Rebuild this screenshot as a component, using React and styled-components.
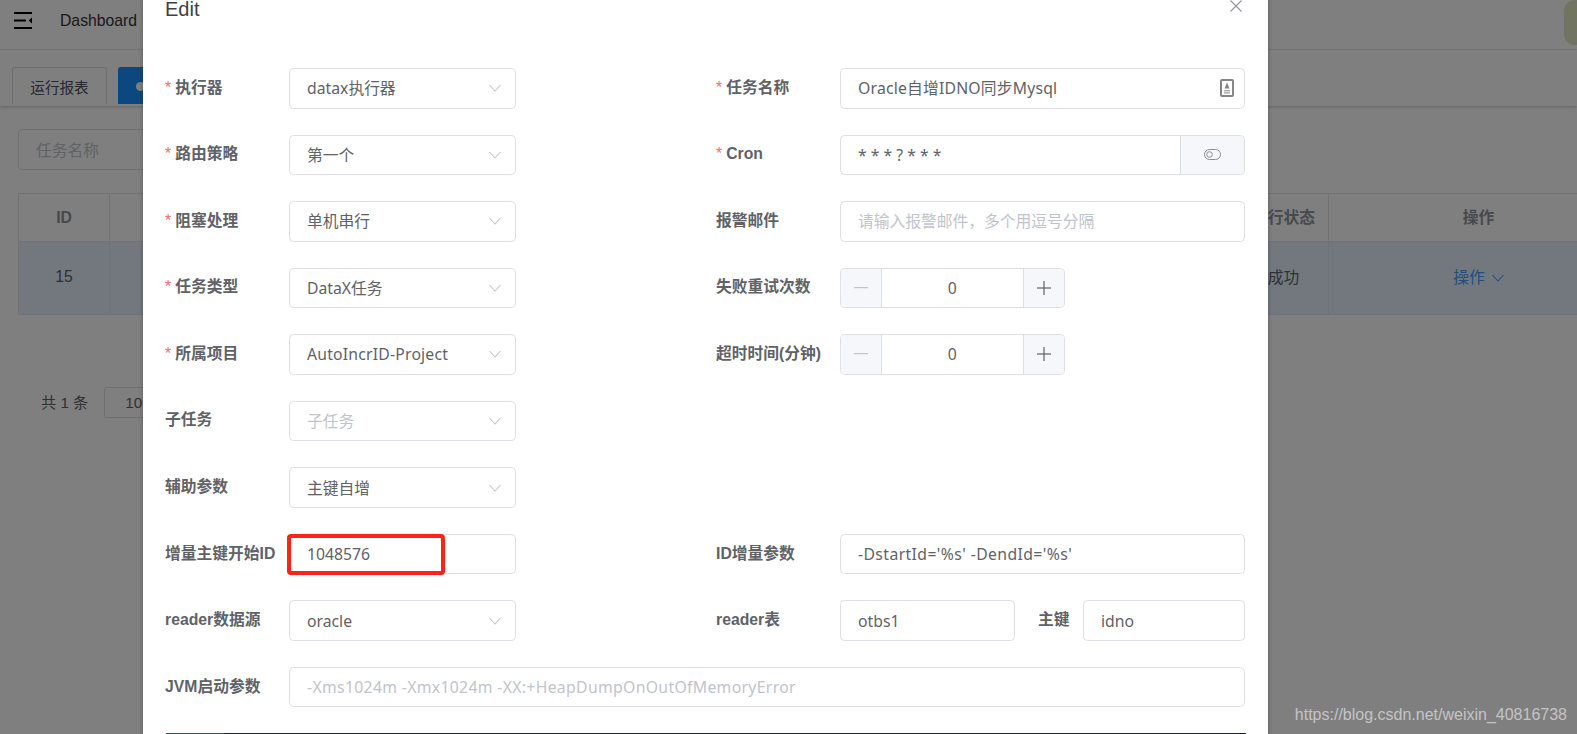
import styled, { createGlobalStyle } from 'styled-components';

const FONT = '"Liberation Sans", "Noto Sans CJK SC", Arial, sans-serif';
const FIELD_FONT = '"Noto Sans", "Noto Sans CJK SC", Arial, sans-serif';

const GlobalStyle = createGlobalStyle`
  html, body {
    margin: 0;
    height: 100%;
    overflow: hidden;
    background: #fff;
    font-family: ${FONT};
  }
  * {
    box-sizing: border-box;
  }
`;

const Page = styled.div`
  width: 1577px;
  height: 734px;
  overflow: hidden;
  position: relative;
  background: #fff;
`;

/* underlying app */
const Navbar = styled.header`
  height: 50px;
  display: flex;
  align-items: center;
  justify-content: space-between;
  padding-left: 14px;
  border-bottom: 1px solid #f0f0f0;
`;

const NavLeft = styled.div`
  display: flex;
  align-items: center;
  gap: 28px;
  font-size: 15.75px;
  color: #333;
  margin-top: -8px;
`;

const Avatar = styled.div`
  width: 45px;
  height: 45px;
  margin-top: -5px;
  margin-right: -32px;
  border-radius: 11px;
  background: #e0e8c0;
`;

const TagsBar = styled.div`
  height: 56px;
  display: flex;
  gap: 11px;
  padding: 17px 0 0 12px;
  box-shadow: 0 1px 3px rgba(0, 0, 0, 0.22);
`;

const Tag = styled.div`
  height: 37px;
  display: flex;
  align-items: center;
  justify-content: ${(p) => (p.$active ? 'flex-start' : 'center')};
  gap: 6px;
  width: ${(p) => (p.$active ? '120px' : '95px')};
  padding-left: ${(p) => (p.$active ? '17px' : '0')};
  font-size: 14.6px;
  color: ${(p) => (p.$active ? '#fff' : '#495060')};
  background: ${(p) => (p.$active ? '#1890ff' : '#fff')};
  border: 1px solid ${(p) => (p.$active ? '#1890ff' : '#d8dce5')};
  border-bottom: none;
  border-radius: 3px 3px 0 0;
`;

const TagDot = styled.span`
  width: 9px;
  height: 9px;
  border-radius: 50%;
  background: #fff;
`;

const Content = styled.main`
  padding: 23px 0 0 18px;
`;

const SearchBox = styled.div`
  width: 225px;
  height: 41px;
  display: flex;
  align-items: center;
  padding-left: 17px;
  border: 1px solid #dcdfe6;
  border-radius: 4px;
  font-size: 15.75px;
  color: #c0c4cc;
`;

const Table = styled.div`
  width: 1611px;
  margin-top: 23px;
  display: grid;
  grid-template-columns: 91px 1fr 90px 300px;
  grid-template-rows: 48px 73px;
  border-top: 1px solid #dfe6ec;
  border-left: 1px solid #dfe6ec;
`;

const Cell = styled.div`
  display: flex;
  align-items: center;
  justify-content: center;
  gap: 7px;
  line-height: 20px;
  padding-bottom: ${(p) => (p.$lift ? '2px' : '0')};
  border-right: 1px solid #dfe6ec;
  border-bottom: 1px solid #dfe6ec;
  font-size: 15.75px;
  font-weight: ${(p) => (p.$head ? 700 : 400)};
  color: ${(p) => (p.$head ? '#909399' : '#606266')};
  background: ${(p) => (p.$head ? '#fff' : '#e6f0ff')};
`;

const RowLink = styled.span`
  display: flex;
  align-items: center;
  gap: 7px;
  color: #409eff;
`;

const Pagination = styled.div`
  display: flex;
  align-items: center;
  gap: 16px;
  margin: 72px 0 0 23px;
  font-size: 15.2px;
  line-height: 20px;
  color: #606266;
`;

const PageSize = styled.div`
  width: 120px;
  height: 31px;
  display: flex;
  align-items: center;
  padding-left: 20px;
  border: 1px solid #dcdfe6;
  border-radius: 3px;
`;

/* dialog */
const Overlay = styled.div`
  position: absolute;
  inset: 0;
  background: rgba(0, 0, 0, 0.5);
`;

const Dialog = styled.div`
  width: 1125px;
  height: 900px;
  margin: -15px 0 0 143px;
  background: #fff;
  box-shadow: 0 2px 4px rgba(0, 0, 0, 0.3);
`;

const DialogHead = styled.div`
  display: flex;
  justify-content: space-between;
  align-items: flex-start;
  padding: 15px 26px 48px 22px;
  font-size: 20px;
  line-height: 18px;
  color: #3f4144;
`;

const Form = styled.div`
  display: grid;
  grid-template-columns: 551px 529px;
  grid-auto-rows: 40.5px;
  row-gap: 26.05px;
  margin: 2px 0 0 22px;
`;

const Item = styled.div`
  display: flex;
  align-items: center;
  grid-column: ${(p) => (p.$wide ? '1 / 3' : 'auto')};
`;

const Label = styled.label`
  flex: 0 0 124px;
  margin-top: -1px;
  font-size: 15.75px;
  line-height: 20px;
  font-weight: 700;
  color: #606266;
  white-space: nowrap;
`;

const Required = styled.span`
  color: #f56c6c;
  font-weight: 400;
  margin-right: 4px;
`;

const Field = styled.div`
  position: relative;
  height: 40.5px;
  width: ${(p) => p.$width || '100%'};
  flex: ${(p) => (p.$width ? '0 0 auto' : '1')};
  display: flex;
  align-items: center;
  justify-content: space-between;
  padding: 0 14px 0 17px;
  background: #fff;
  border: 1px solid #dcdfe6;
  border-radius: 4.5px;
  font-family: ${FIELD_FONT};
  font-size: 15.75px;
  line-height: 20px;
  letter-spacing: ${(p) => p.$track || 'normal'};
  color: ${(p) => (p.$empty ? '#c0c4cc' : '#606266')};
  white-space: nowrap;
`;

const IconField = styled(Field)`
  padding-right: 10px;
`;

const GroupField = styled(Field)`
  padding-right: 0;
  overflow: hidden;
`;

const Append = styled.div`
  width: 64px;
  height: 100%;
  display: flex;
  align-items: center;
  justify-content: center;
  background: #f5f7fa;
  border-left: 1px solid #dcdfe6;
`;

const InlineLabel = styled.span`
  margin: -1px 13.5px 0 23px;
  font-size: 15.75px;
  line-height: 20px;
  font-weight: 700;
  color: #606266;
  white-space: nowrap;
`;

const Stepper = styled.div`
  width: 225px;
  height: 40.5px;
  display: grid;
  grid-template-columns: 41px 1fr 41.5px;
  border: 1px solid #dcdfe6;
  border-radius: 4.5px;
  overflow: hidden;
  font-family: ${FIELD_FONT};
  font-size: 15.75px;
  color: #606266;
`;

const StepButton = styled.div`
  display: flex;
  align-items: center;
  justify-content: center;
  background: #f5f7fa;
  color: ${(p) => (p.$disabled ? '#c0c4cc' : '#606266')};
  border-${(p) => (p.$disabled ? 'right' : 'left')}: 1px solid #dcdfe6;
`;

const StepValue = styled.div`
  display: flex;
  align-items: center;
  justify-content: center;
`;

const RedMark = styled.div`
  position: absolute;
  left: -3px;
  top: -1px;
  width: 158px;
  height: 41px;
  border: 4px solid #fb2416;
  border-radius: 4px;
`;

const Editor = styled.div`
  display: flex;
  height: 100px;
  margin: 25.5px 0 0 22.5px;
  width: 1080px;
  background: #1c2430;
`;

const EditorGutter = styled.div`
  width: 58px;
  background: #2c4d55;
`;

const Watermark = styled.div`
  position: absolute;
  right: 10px;
  bottom: 9px;
  font-size: 16px;
  line-height: 20px;
  color: #c4c4c4;
`;

const Chevron = ({ color = '#c0c4cc' }) => (
  <svg width="12" height="8" viewBox="0 0 12 8" fill="none" stroke={color} strokeWidth="1.1">
    <path d="M0.5 1 L6 7 L11.5 1" />
  </svg>
);

const Hamburger = () => (
  <svg width="18" height="17" viewBox="0 0 18 17" fill="#000">
    <rect x="0" y="0" width="18" height="2" />
    <rect x="0" y="7.5" width="12" height="2" />
    <path d="M18 5.6 L14.6 8.5 L18 11.4 Z" />
    <rect x="0" y="15" width="18" height="2" />
  </svg>
);

const CloseIcon = () => (
  <svg width="12" height="12" viewBox="0 0 12 12" stroke="#909399" strokeWidth="1.1">
    <path d="M0.5 0.5 L11.5 11.5 M11.5 0.5 L0.5 11.5" />
  </svg>
);

const BadgeIcon = () => (
  <svg width="14" height="18" viewBox="0 0 14 18" fill="none">
    <rect x="1" y="1" width="12" height="16" rx="1" stroke="#858585" strokeWidth="2" />
    <path d="M7 3.5 L9.5 9.5 H4.5 Z" fill="#858585" />
    <rect x="4" y="11" width="6" height="1.4" fill="#a8a8a8" />
    <rect x="4" y="13.2" width="6" height="1.4" fill="#a8a8a8" />
  </svg>
);

const ToggleIcon = () => (
  <svg width="17" height="11" viewBox="0 0 17 11" fill="none" stroke="#8c8c8c" strokeWidth="1">
    <rect x="0.5" y="0.5" width="16" height="10" rx="5" />
    <circle cx="5.5" cy="5.5" r="2.8" />
  </svg>
);

const SelectField = ({ value, empty, track }) => (
  <Field $width="227px" $empty={empty} $track={track}>
    {value}
    <Chevron />
  </Field>
);

const FormLabel = ({ required, children }) => (
  <Label>
    {required && <Required>*</Required>}
    {children}
  </Label>
);

const NumberField = ({ value }) => (
  <Stepper>
    <StepButton $disabled>
      <svg width="14" height="2" viewBox="0 0 14 2"><rect width="14" height="1.2" fill="#c0c4cc" /></svg>
    </StepButton>
    <StepValue>{value}</StepValue>
    <StepButton>
      <svg width="14" height="14" viewBox="0 0 14 14" fill="#606266">
        <rect y="6.4" width="14" height="1.2" />
        <rect x="6.4" width="1.2" height="14" />
      </svg>
    </StepButton>
  </Stepper>
);

const App = () => {
  return (
    <Page>
      <GlobalStyle />
      <Navbar>
        <NavLeft>
          <Hamburger />
          <span>Dashboard</span>
        </NavLeft>
        <Avatar />
      </Navbar>
      <TagsBar>
        <Tag>运行报表</Tag>
        <Tag $active>
          <TagDot />
        </Tag>
      </TagsBar>
      <Content>
        <SearchBox>任务名称</SearchBox>
        <Table>
          <Cell $head>ID</Cell>
          <Cell $head />
          <Cell $head>执行状态</Cell>
          <Cell $head>操作</Cell>
          <Cell $lift>15</Cell>
          <Cell />
          <Cell>成功</Cell>
          <Cell>
            <RowLink>
              操作
              <Chevron color="#409eff" />
            </RowLink>
          </Cell>
        </Table>
        <Pagination>
          <span>共 1 条</span>
          <PageSize>10条/页</PageSize>
        </Pagination>
      </Content>

      <Overlay>
        <Dialog>
          <DialogHead>
            <span>Edit</span>
            <CloseIcon />
          </DialogHead>
          <Form>
            <Item>
              <FormLabel required>执行器</FormLabel>
              <SelectField value="datax执行器" />
            </Item>
            <Item>
              <FormLabel required>任务名称</FormLabel>
              <IconField $track="0.2px">
                Oracle自增IDNO同步Mysql
                <BadgeIcon />
              </IconField>
            </Item>
            <Item>
              <FormLabel required>路由策略</FormLabel>
              <SelectField value="第一个" />
            </Item>
            <Item>
              <FormLabel required>Cron</FormLabel>
              <GroupField>
                * * * ? * * *
                <Append>
                  <ToggleIcon />
                </Append>
              </GroupField>
            </Item>
            <Item>
              <FormLabel required>阻塞处理</FormLabel>
              <SelectField value="单机串行" />
            </Item>
            <Item>
              <FormLabel>报警邮件</FormLabel>
              <Field $empty>请输入报警邮件，多个用逗号分隔</Field>
            </Item>
            <Item>
              <FormLabel required>任务类型</FormLabel>
              <SelectField value="DataX任务" />
            </Item>
            <Item>
              <FormLabel>失败重试次数</FormLabel>
              <NumberField value="0" />
            </Item>
            <Item>
              <FormLabel required>所属项目</FormLabel>
              <SelectField value="AutoIncrID-Project" track="0.2px" />
            </Item>
            <Item>
              <FormLabel>超时时间(分钟)</FormLabel>
              <NumberField value="0" />
            </Item>
            <Item $wide>
              <FormLabel>子任务</FormLabel>
              <SelectField value="子任务" empty />
            </Item>
            <Item $wide>
              <FormLabel>辅助参数</FormLabel>
              <SelectField value="主键自增" />
            </Item>
            <Item>
              <FormLabel>增量主键开始ID</FormLabel>
              <Field $width="227px">
                1048576
                <RedMark />
              </Field>
            </Item>
            <Item>
              <FormLabel>ID增量参数</FormLabel>
              <Field $track="0.4px">-DstartId='%s' -DendId='%s'</Field>
            </Item>
            <Item>
              <FormLabel>reader数据源</FormLabel>
              <SelectField value="oracle" />
            </Item>
            <Item>
              <FormLabel>reader表</FormLabel>
              <Field $width="175px">otbs1</Field>
              <InlineLabel>主键</InlineLabel>
              <Field>idno</Field>
            </Item>
            <Item $wide>
              <FormLabel>JVM启动参数</FormLabel>
              <Field $empty $track="0.33px">-Xms1024m -Xmx1024m -XX:+HeapDumpOnOutOfMemoryError</Field>
            </Item>
          </Form>
          <Editor>
            <EditorGutter />
          </Editor>
        </Dialog>
      </Overlay>
      <Watermark>https://blog.csdn.net/weixin_40816738</Watermark>
    </Page>
  );
};

export default App;
